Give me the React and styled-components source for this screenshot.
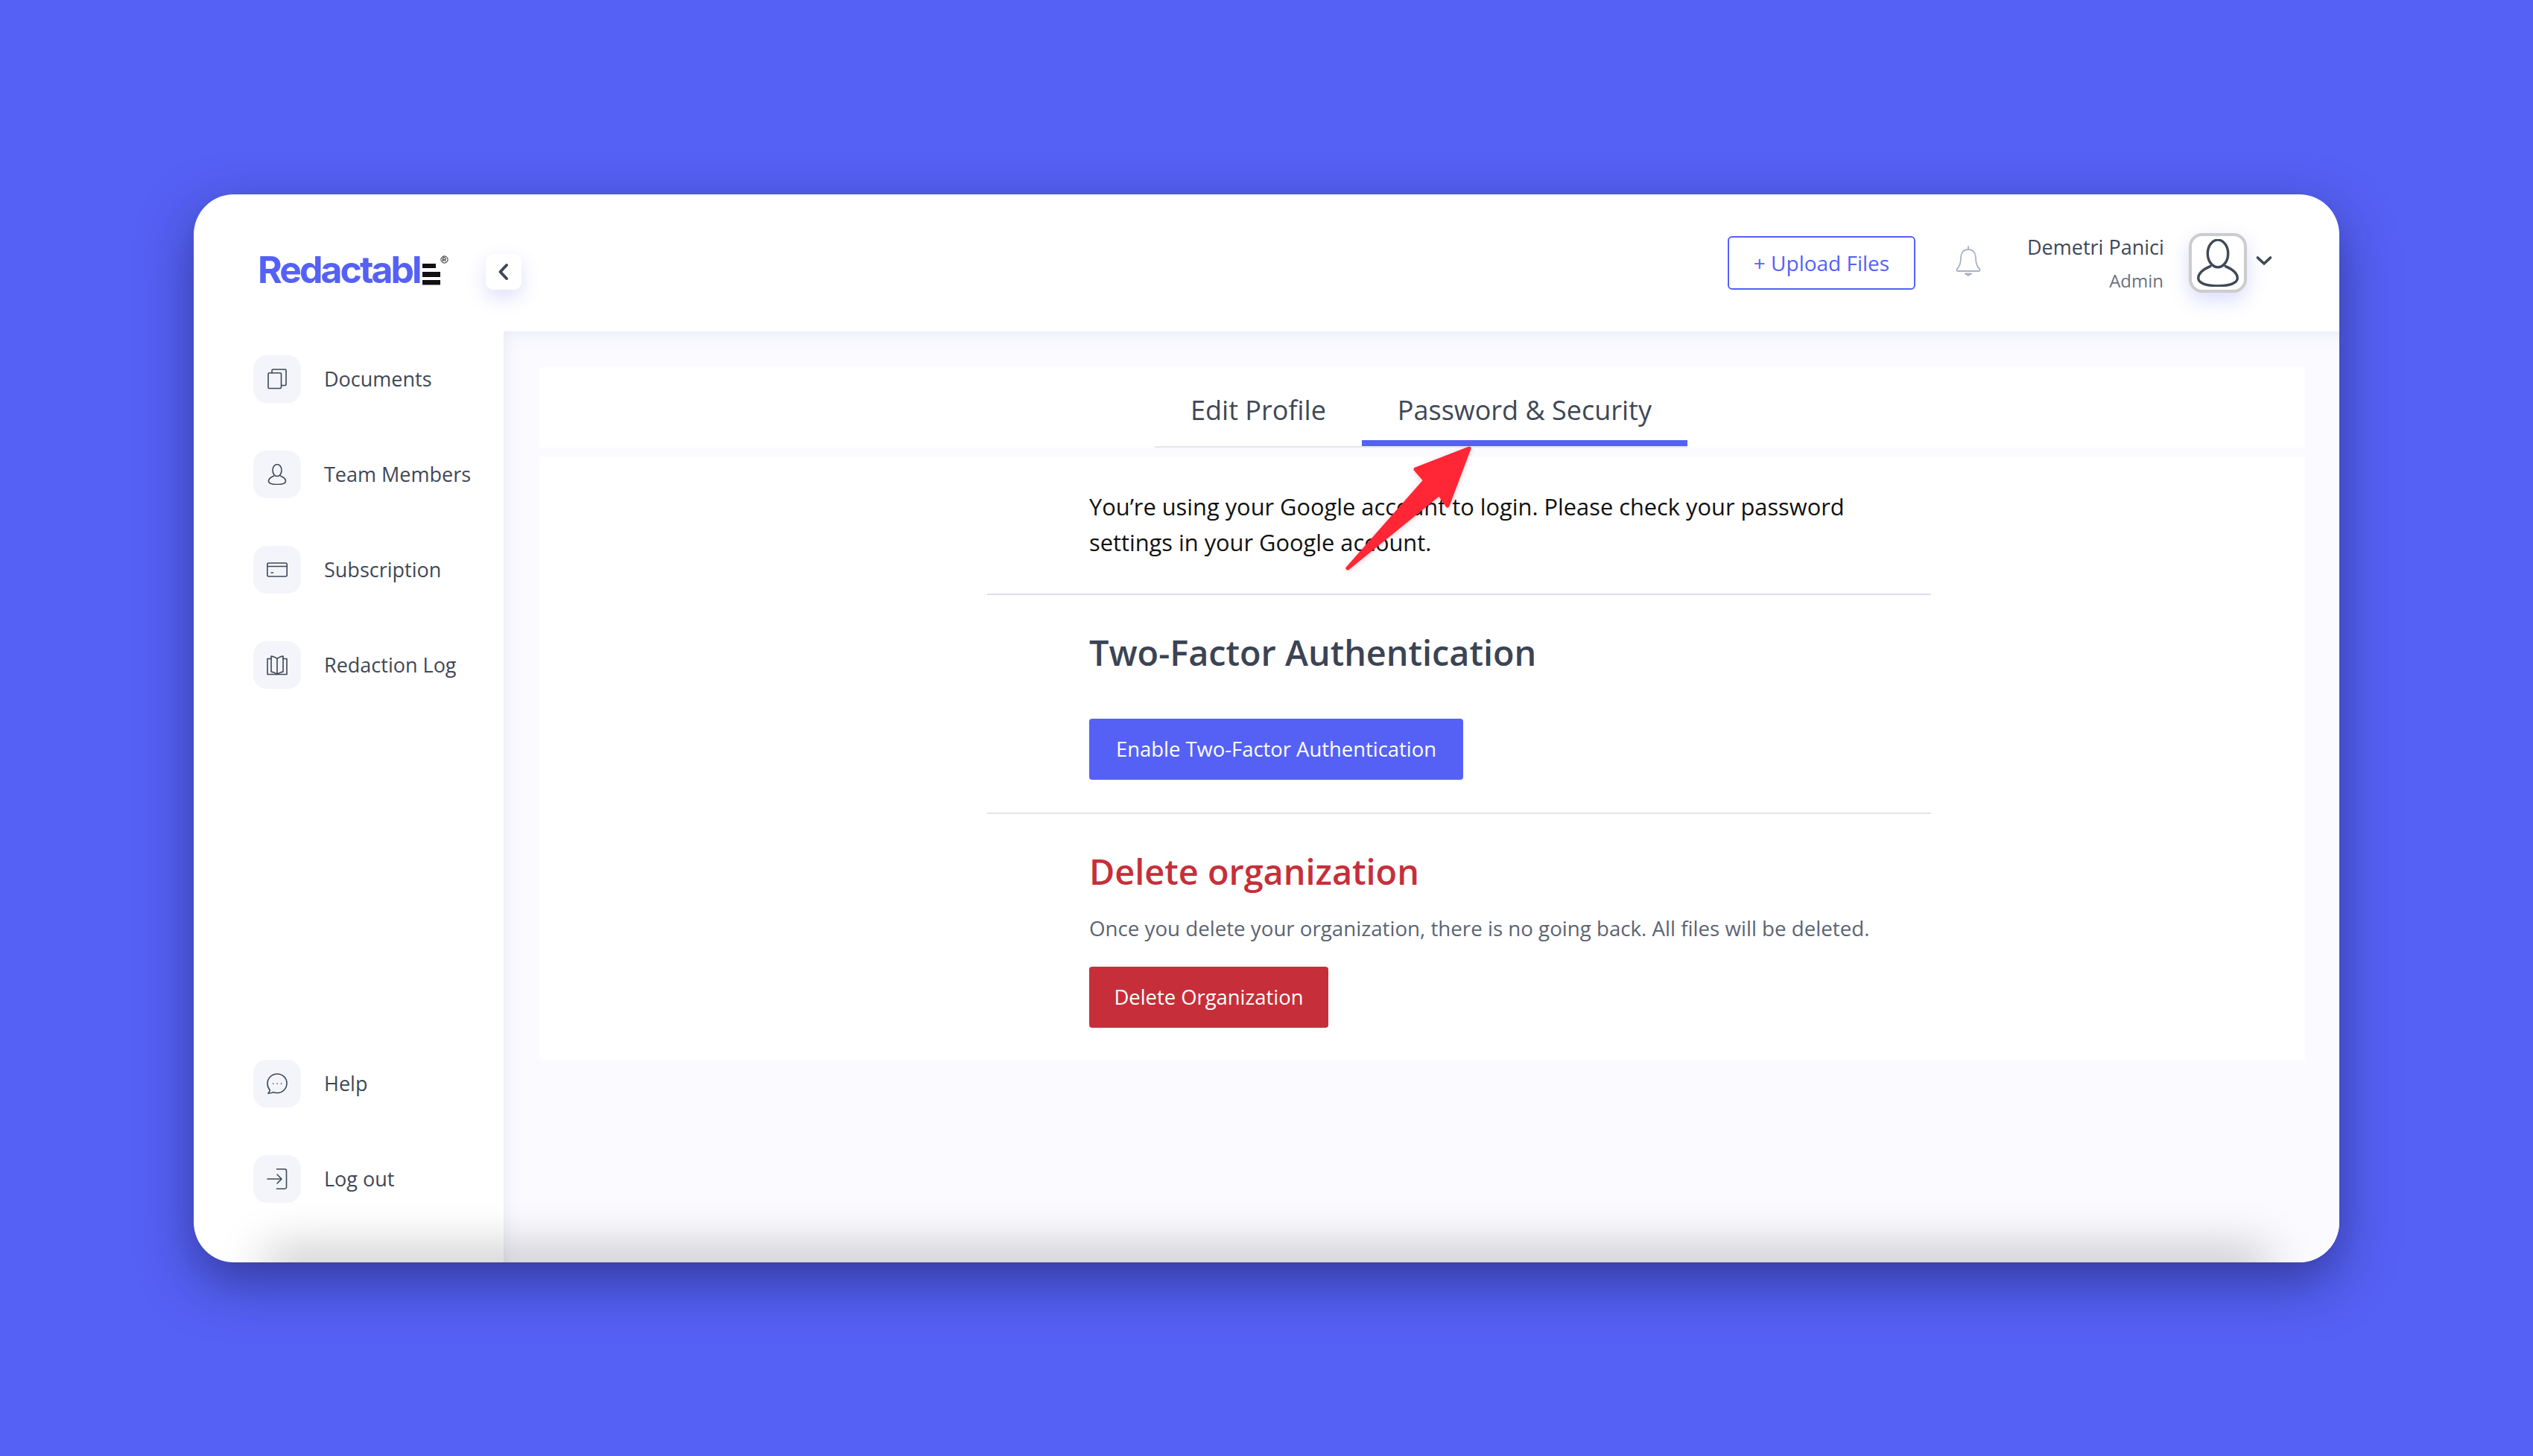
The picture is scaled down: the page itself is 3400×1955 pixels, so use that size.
import React from "react";
import styled, { createGlobalStyle } from "styled-components";

const GlobalStyle = createGlobalStyle`
  html, body {
    margin: 0;
    padding: 0;
  }
  body {
    background: #5561f5;
    font-family: "Open Sans", "Noto Sans", sans-serif;
  }
  * {
    box-sizing: border-box;
  }
`;

const Page = styled.div`
  width: 3400px;
  height: 1955px;
  display: flex;
  align-items: center;
  justify-content: center;
  background: #5561f5;
`;

const Shell = styled.div`
  position: relative;
  width: 2880px;
  height: 1434px;
  border-radius: 54px;
  box-shadow: 0 26px 70px rgba(20, 20, 70, 0.5);
`;

const Card = styled.div`
  position: relative;
  width: 100%;
  height: 100%;
  display: flex;
  flex-direction: column;
  background: #fff;
  border-radius: 54px;
  overflow: hidden;

  &::after {
    content: "";
    position: absolute;
    left: 110px;
    right: 110px;
    bottom: -12px;
    height: 12px;
    box-shadow: 0 0 64px 14px rgba(0, 0, 0, 0.28);
  }
`;

const Header = styled.header`
  height: 184px;
  flex: none;
  display: flex;
  align-items: flex-start;
  padding: 52px 90px 0 86px;
`;

const LogoRow = styled.div`
  display: flex;
  align-items: flex-start;
  margin-top: 30px;
`;

const LogoText = styled.span`
  font-family: "Inter", sans-serif;
  font-weight: 700;
  font-size: 50px;
  line-height: 38px;
  letter-spacing: -3px;
  color: #5561f5;
`;

const LogoMark = styled.svg`
  margin-left: 3px;
  flex: none;
`;

const CollapseButton = styled.button`
  width: 48px;
  height: 48px;
  margin: 28px 0 0 49px;
  padding: 0;
  border: 0;
  border-radius: 10px;
  background: #fff;
  color: #3f4856;
  display: flex;
  align-items: center;
  justify-content: center;
  box-shadow: 0 10px 26px rgba(85, 97, 245, 0.2);
`;

const HeaderRight = styled.div`
  margin-left: auto;
  display: flex;
  align-items: flex-start;
`;

const UploadButton = styled.button`
  width: 252px;
  height: 72px;
  margin-top: 4px;
  border: 2px solid #5561f5;
  border-radius: 6px;
  background: #fff;
  color: #5561f5;
  font: 400 28px "Open Sans", sans-serif;
`;

const BellWrap = styled.div`
  margin: 17px 0 0 54px;
  color: #a9b1c2;
  display: flex;
`;

const UserInfo = styled.div`
  margin-left: 62px;
  width: 183px;
  text-align: right;
  white-space: nowrap;
`;

const UserName = styled.div`
  font-size: 27px;
  line-height: 38px;
  color: #3f4856;
`;

const UserRole = styled.div`
  margin-top: 10px;
  font-size: 24px;
  line-height: 32px;
  color: #6b7280;
`;

const Avatar = styled.div`
  width: 78px;
  height: 80px;
  margin: 0 0 0 34px;
  border: 4px solid #cccccc;
  border-radius: 18px;
  background: #fff;
  color: #3f4856;
  display: flex;
  align-items: center;
  justify-content: center;
  box-shadow: 0 10px 26px rgba(85, 97, 245, 0.22);
`;

const CaretWrap = styled.div`
  margin: 30px 0 0 12px;
  color: #3f4856;
  display: flex;
`;

const Body = styled.div`
  flex: 1;
  display: flex;
  min-height: 0;
`;

const Sidebar = styled.aside`
  width: 416px;
  flex: none;
  display: flex;
  flex-direction: column;
  justify-content: space-between;
  padding: 32px 0 80px 80px;
`;

const NavGroup = styled.nav`
  display: flex;
  flex-direction: column;
  gap: 64px;
`;

const NavItem = styled.div`
  display: flex;
  align-items: center;
  gap: 31px;
  font-size: 27px;
  color: #3f4856;
`;

const NavIcon = styled.div`
  width: 64px;
  height: 64px;
  border-radius: 18px;
  background: #f4f5fb;
  display: flex;
  align-items: center;
  justify-content: center;
  color: #3f4856;
`;

const Main = styled.main`
  flex: 1;
  display: flex;
  flex-direction: column;
  gap: 12px;
  padding: 48px 46px 0 48px;
  background: #fafaff;
  box-shadow: inset 14px 14px 24px -14px rgba(110, 110, 170, 0.12);
`;

const TabPanel = styled.div`
  height: 108px;
  background: #fff;
  display: flex;
  justify-content: center;
  padding-right: 3px;
`;

const TabList = styled.div`
  display: flex;
  height: 108px;
  border-bottom: 2px solid #e5e7ef;
`;

const Tab = styled.div`
  height: 106px;
  padding: 18px 48px 0;
  display: flex;
  align-items: center;
  font-size: 36px;
  color: #3f4856;
  border-bottom: 8px solid ${(p) => (p.$active ? "#5561f5" : "transparent")};
`;

const ContentPanel = styled.section`
  height: 811px;
  background: #fff;
  padding: 0 0 0 601px;
`;

const ContentColumn = styled.div`
  width: 1267px;
`;

const Section = styled.div`
  padding: ${(p) => p.$pad || "0"} 0 0 137px;
  height: ${(p) => p.$height};
  border-bottom: ${(p) => (p.$line ? `2px solid ${p.$line}` : "0")};
`;

const Notice = styled.p`
  margin: 0;
  width: 1040px;
  font-size: 30.8px;
  line-height: 48px;
  color: #111;
`;

const Heading = styled.h2`
  margin: 0;
  font-size: 46.8px;
  line-height: 62px;
  font-weight: 600;
  color: ${(p) => p.$color || "#3b4454"};
`;

const Description = styled.p`
  margin: 26px 0 0;
  font-size: 27.7px;
  line-height: 38px;
  color: #5c6473;
`;

const ActionButton = styled.button`
  display: block;
  width: ${(p) => p.$width};
  height: 82px;
  margin-top: ${(p) => p.$top};
  padding: 0;
  border: 0;
  border-radius: 4px;
  background: ${(p) => p.$bg};
  color: #fff;
  font: 400 27.4px "Open Sans", sans-serif;
`;

const Arrow = styled.svg`
  position: absolute;
  left: 1530px;
  top: 332px;
  filter: drop-shadow(0 2px 3px rgba(90, 0, 20, 0.18));
`;

const Line = ({ size = 28, children, w = 1.6 }) => (
  <svg width={size} height={size} viewBox="0 0 28 28" fill="none" stroke="currentColor" strokeWidth={w} strokeLinecap="round" strokeLinejoin="round">
    {children}
  </svg>
);

const DocsIcon = () => (
  <Line>
    <rect x="2" y="5.7" width="17.5" height="20.8" rx="1.5" />
    <path d="M7 5.5V2.5A1.5 1.5 0 0 1 8.5 1H25a1 1 0 0 1 1 1v19a1.5 1.5 0 0 1-1.5 1.5H20" />
  </Line>
);

const PersonPaths = () => (
  <>
    <ellipse cx="14" cy="8.500" rx="6" ry="8" />
    <path d="M9.500 16C6 17.500 2.500 19.500 2.500 23c0 3 5 4.500 11.500 4.500S25.500 26 25.500 23c0-3.500-3.500-5.500-7-7" />
  </>
);

const CardIcon = () => (
  <Line>
    <rect x="0.8" y="5" width="26.4" height="18" rx="2" />
    <path d="M0.8 9.500h26.4M6 18h2.500" />
  </Line>
);

const BookIcon = () => (
  <Line>
    <path d="M14 5.500V26.500M14 5.500C12 3.500 9 2.500 6 2V23c3 .5 6 1.500 8 3.500M14 5.500C16 3.500 19 2.500 22 2V23c-3 .5-6 1.500-8 3.500" />
    <path d="M6 5.500H1V26.500H27V5.500H22" />
  </Line>
);

const ChatIcon = () => (
  <Line>
    <path d="M14 1C6.800 1 1 6.800 1 14c0 3.600 1.400 6.600 3.400 9-.5 1.600-1.400 3-2.600 4 2.600.2 5-.4 7-1.600 1.600.7 3.400 1.100 5.200 1.100 7.200 0 13-5.800 13-13S21.200 1 14 1Z" />
    <path d="M8.600 14h.2M14 14h.2M19.400 14h.2" />
  </Line>
);

const LogoutIcon = () => (
  <Line>
    <path d="M1 14h19M14 8l6 6-6 6" />
    <path d="M13.500 .8H24a2.500 2.500 0 0 1 2.500 2.500v21.400a2.500 2.500 0 0 1-2.500 2.500H13.500" />
  </Line>
);

const navTop = [
  ["Documents", DocsIcon],
  ["Team Members", () => <Line><PersonPaths /></Line>],
  ["Subscription", CardIcon],
  ["Redaction Log", BookIcon],
];

const navBottom = [
  ["Help", ChatIcon],
  ["Log out", LogoutIcon],
];

const renderNav = (items) =>
  items.map(([label, Icon]) => (
    <NavItem key={label}>
      <NavIcon>
        <Icon />
      </NavIcon>
      {label}
    </NavItem>
  ));

export default function App() {
  return (
    <Page>
      <GlobalStyle />
      <Shell>
        <Card>
          <Header>
            <LogoRow>
              <LogoText>Redactabl</LogoText>
              <LogoMark width="36" height="40" viewBox="0 0 36 40">
                <path d="M0 11h18v6H0zM0 22h24v7H0zM0 33h24v6.500H0z" fill="#111" />
                <circle cx="29.500" cy="5.500" r="4.600" fill="none" stroke="#111" strokeWidth="1" />
                <path d="M27.600 8.400V2.900h2.300a1.500 1.500 0 0 1 0 3h-2.300M29.800 5.900l1.800 2.500" fill="none" stroke="#111" strokeWidth="1" />
              </LogoMark>
            </LogoRow>
            <CollapseButton>
              <svg width="16" height="26" viewBox="0 0 16 26" fill="none" stroke="currentColor" strokeWidth="4" strokeLinecap="round" strokeLinejoin="round">
                <path d="M12 4L3.500 13l8.500 9" />
              </svg>
            </CollapseButton>
            <HeaderRight>
              <UploadButton>+ Upload Files</UploadButton>
              <BellWrap>
                <svg width="34" height="41" viewBox="0 0 34 41" fill="none" stroke="currentColor" strokeWidth="1.8" strokeLinejoin="round" strokeLinecap="round">
                  <path d="M17 1v4M17 5C10 5 7 10 7 16c0 8-2 12-5 15-1.200 1.200-.5 3 1 3h28c1.500 0 2.200-1.800 1-3-3-3-5-7-5-15 0-6-3-11-10-11Z" />
                  <path d="M13 37.500h8l-4 2.500Z" />
                </svg>
              </BellWrap>
              <UserInfo>
                <UserName>Demetri Panici</UserName>
                <UserRole>Admin</UserRole>
              </UserInfo>
              <Avatar>
                <Line size={64} w={1.5}>
                  <PersonPaths />
                </Line>
              </Avatar>
              <CaretWrap>
                <svg width="22" height="14" viewBox="0 0 22 14" fill="none" stroke="currentColor" strokeWidth="3.600" strokeLinecap="round" strokeLinejoin="round">
                  <path d="M2.500 3L11 11l8.500-8" />
                </svg>
              </CaretWrap>
            </HeaderRight>
          </Header>
          <Body>
            <Sidebar>
              <NavGroup>{renderNav(navTop)}</NavGroup>
              <NavGroup>{renderNav(navBottom)}</NavGroup>
            </Sidebar>
            <Main>
              <TabPanel>
                <TabList>
                  <Tab>Edit Profile</Tab>
                  <Tab $active>Password &amp; Security</Tab>
                </TabList>
              </TabPanel>
              <ContentPanel>
                <ContentColumn>
                  <Section $pad="43px" $height="186px" $line="#dddbee">
                    <Notice>
                      You’re using your Google account to login. Please check your password settings in your Google account.
                    </Notice>
                  </Section>
                  <Section $pad="46px" $height="294px" $line="#e3e4ea">
                    <Heading>Two-Factor Authentication</Heading>
                    <ActionButton $width="502px" $top="58px" $bg="#5561f5">
                      Enable Two-Factor Authentication
                    </ActionButton>
                  </Section>
                  <Section $pad="46px">
                    <Heading $color="#c62f3a">Delete organization</Heading>
                    <Description>
                      Once you delete your organization, there is no going back. All files will be deleted.
                    </Description>
                    <ActionButton $width="321px" $top="33px" $bg="#c62f3a">
                      Delete Organization
                    </ActionButton>
                  </Section>
                </ContentColumn>
              </ContentPanel>
            </Main>
          </Body>
        </Card>
        <Arrow width="190" height="190" viewBox="0 0 190 190">
          <path
            d="M182 9L110 37L123 52L19 170L142 70L153 86Z"
            fill="#ff2636"
            stroke="#ff2636"
            strokeWidth="5"
            strokeLinejoin="round"
          />
        </Arrow>
      </Shell>
    </Page>
  );
}
